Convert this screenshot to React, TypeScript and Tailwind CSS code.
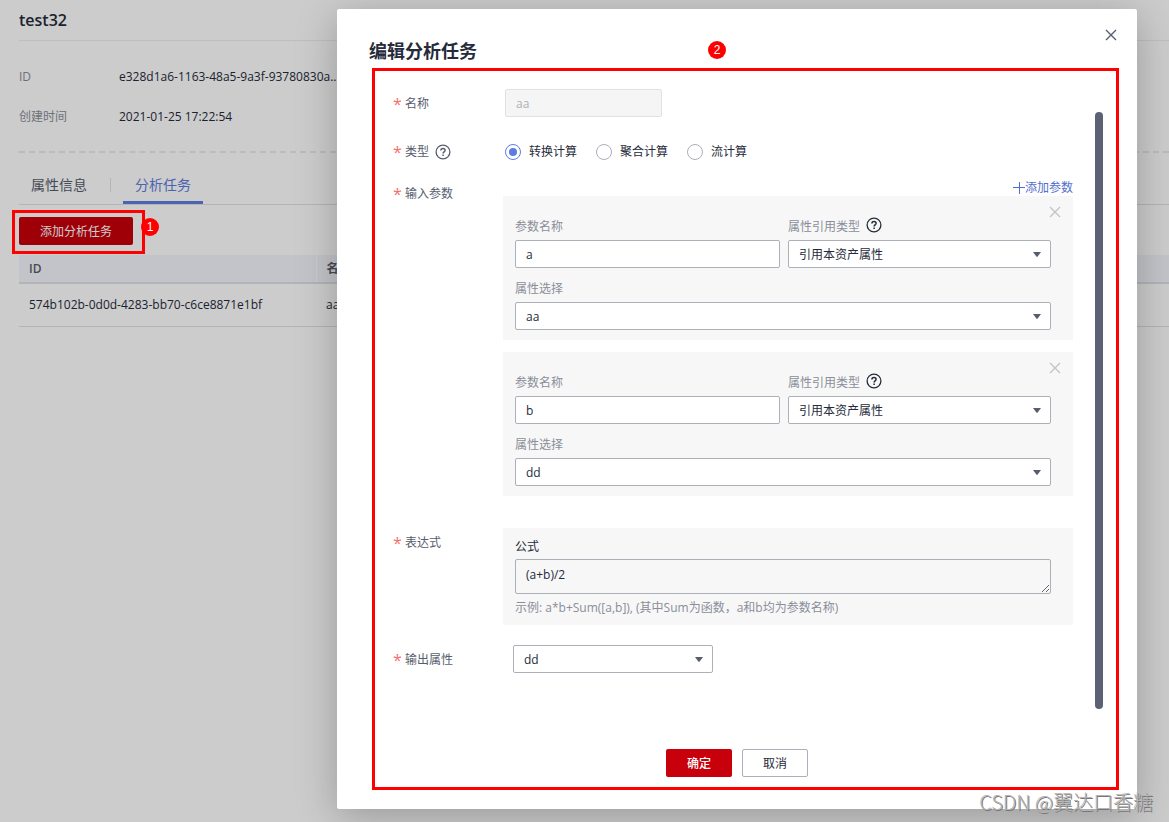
import { ReactNode, useState } from 'react';

const PARAMS = [
  { id: 1, name: 'a', refType: '引用本资产属性', attribute: 'aa' },
  { id: 2, name: 'b', refType: '引用本资产属性', attribute: 'dd' },
];

const CALC_TYPES = ['转换计算', '聚合计算', '流计算'];

function CloseIcon({ className }: { className: string }) {
  return (
    <svg viewBox="0 0 12 12" className={className} fill="none" stroke="currentColor" strokeWidth="1.4" aria-hidden="true">
      <path d="M1 1l10 10M11 1L1 11" />
    </svg>
  );
}

function HelpIcon({ className }: { className: string }) {
  return (
    <svg viewBox="0 0 16 16" className={className} fill="none" stroke="currentColor" aria-hidden="true">
      <circle cx="8" cy="8" r="6.9" strokeWidth="1.3" />
      <path d="M5.9 6.4c0-1.3.9-2 2.1-2s2.1.8 2.1 1.9c0 1.5-2 1.6-2 3.2" strokeWidth="1.5" />
      <path d="M8.1 10.6v1.5" strokeWidth="1.5" />
    </svg>
  );
}

function Badge({ children, className }: { children: ReactNode; className: string }) {
  return (
    <span
      className={`absolute z-30 flex h-[18px] w-[18px] items-center justify-center rounded-full bg-[#ff0000] font-['Liberation_Sans',sans-serif] text-xs text-white ${className}`}
    >
      {children}
    </span>
  );
}

function Select({ id, value }: { id: string; value: string }) {
  return (
    <div className="relative">
      <select
        id={id}
        defaultValue={value}
        className="block h-7 w-full appearance-none rounded-xs border border-[#adb0b8] bg-white px-2.5 pt-0.5 text-xs text-[#252b3a]"
      >
        <option>{value}</option>
      </select>
      <svg
        viewBox="0 0 8 5"
        className="pointer-events-none absolute top-3 right-2.5 h-[5px] w-2 fill-[#575d6c]"
        aria-hidden="true"
      >
        <path d="M0 0h8L4.6 4.6a.8.8 0 0 1-1.2 0z" />
      </svg>
    </div>
  );
}

function FormRow({ label, help, htmlFor, children }: { label: string; help?: boolean; htmlFor?: string; children: ReactNode }) {
  return (
    <div className="grid grid-cols-[110px_minmax(0,1fr)]">
      <div className="flex h-[30px] items-center text-[#575d6c]">
        <span className="w-3 text-base leading-none text-[#f66f6a]">*</span>
        <label htmlFor={htmlFor}>{label}</label>
        {help && <HelpIcon className="ml-1.5 h-4 w-4" />}
      </div>
      {children}
    </div>
  );
}

function ParamCard({ param }: { param: (typeof PARAMS)[number] }) {
  return (
    <div className="relative bg-[#f7f7f7] pt-5 pr-[22px] pb-2.5 pl-3">
      <button type="button" aria-label="删除" className="absolute top-2.5 right-3 text-[#c2c4c9]">
        <CloseIcon className="h-3 w-3" />
      </button>
      <div className="grid grid-cols-[265fr_263fr] gap-2">
        <div>
          <label htmlFor={`name-${param.id}`} className="flex h-6 items-start leading-[22px] text-[#8a8e99]">
            参数名称
          </label>
          <input
            id={`name-${param.id}`}
            defaultValue={param.name}
            className="block h-7 w-full rounded-xs border border-[#adb0b8] bg-white px-2.5 text-[#252b3a]"
          />
        </div>
        <div>
          <div className="flex h-6 items-start leading-[22px] text-[#8a8e99]">
            <label htmlFor={`ref-${param.id}`}>属性引用类型</label>
            <HelpIcon className="mt-px ml-1.5 h-4 w-4 text-[#252b3a]" />
          </div>
          <Select id={`ref-${param.id}`} value={param.refType} />
        </div>
      </div>
      <label htmlFor={`attr-${param.id}`} className="mt-2.5 flex h-6 items-start leading-[22px] text-[#8a8e99]">
        属性选择
      </label>
      <Select id={`attr-${param.id}`} value={param.attribute} />
    </div>
  );
}

function AssetPage() {
  return (
    <main className="min-h-screen bg-white pl-[19px] text-[#252b3a]">
      <h1 className="flex h-[41px] items-center border-b border-[#eeeeee] text-base font-semibold">test32</h1>
      <dl className="pt-4 pb-3.5">
        <div className="flex h-10 items-center">
          <dt className="w-[100px] text-[#8a8e99]">ID</dt>
          <dd>e328d1a6-1163-48a5-9a3f-93780830a...</dd>
        </div>
        <div className="flex h-10 items-center">
          <dt className="w-[100px] text-[#8a8e99]">创建时间</dt>
          <dd>2021-01-25 17:22:54</dd>
        </div>
      </dl>
      <div className="border-t-2 border-dashed border-[#eaeaea]" />

      <nav className="mt-3 flex h-10 items-stretch border-b border-[#dfe1e6] text-sm">
        <button type="button" className="border-b-3 border-transparent px-3 pt-1 text-[#575d6c]">
          属性信息
        </button>
        <span className="mr-3 ml-[11px] h-3.5 w-px self-center bg-[#dfe1e6]" />
        <button type="button" className="border-b-3 border-[#5e7ce0] px-3 pt-1 text-[#5e7ce0]">
          分析任务
        </button>
      </nav>

      <div className="relative mt-3 w-fit">
        <button type="button" className="block h-7 rounded-xs bg-[#c7000b] px-[21px] pt-0.5 text-white">
          添加分析任务
        </button>
        <div className="absolute -top-[7px] -right-3 -bottom-[9px] -left-[7px] z-30 border-3 border-[#ff0000]" />
        <Badge className="top-px -right-[26px]">1</Badge>
      </div>

      <table className="mt-2.5 w-full table-fixed text-left">
        <thead>
          <tr className="h-7 border-b-2 border-[#dfe1e6] bg-[#f4f5fc] text-[#575d6c]">
            <th className="w-[297px] border-r border-white px-2.5 font-semibold">ID</th>
            <th className="px-2.5 font-semibold">名称</th>
          </tr>
        </thead>
        <tbody>
          <tr className="h-[43px] border-b border-[#dfe1e6]">
            <td className="px-2.5">574b102b-0d0d-4283-bb70-c6ce8871e1bf</td>
            <td className="px-2.5">aa</td>
          </tr>
        </tbody>
      </table>
    </main>
  );
}

function EditTaskDialog() {
  const [calcType, setCalcType] = useState(CALC_TYPES[0]);

  return (
    <section
      role="dialog"
      aria-labelledby="dialog-title"
      className="relative flex w-full max-w-[800px] flex-col rounded-xs bg-white px-8 pb-8 text-[#252b3a] shadow-[0_8px_40px_rgba(0,0,0,0.25)]"
    >
      <header className="flex justify-between pt-7">
        <h2 id="dialog-title" className="text-lg leading-7 font-bold">
          编辑分析任务
        </h2>
        <button type="button" aria-label="关闭" className="-mt-2 -mr-[18px] flex h-6 w-6 justify-center text-[#575d6c]">
          <CloseIcon className="h-3 w-3" />
        </button>
      </header>

      <div className="flex flex-1 gap-[22px] pt-6 pr-0.5 pl-6">
        <form id="task-form" className="flex flex-1 flex-col">
          <FormRow label="名称" htmlFor="task-name">
            <div className="pl-0.5">
              <input
                id="task-name"
                disabled
                defaultValue="aa"
                className="block h-7 w-[157px] rounded-xs border border-[#dfe1e6] bg-[#f5f5f5] px-2.5 text-[#adb0b8]"
              />
            </div>
          </FormRow>
          <div className="h-[18px]" />
          <FormRow label="类型" help>
            <div className="flex items-center gap-[19px] pl-0.5">
              {CALC_TYPES.map(type => (
                <label key={type} className="flex items-center gap-2">
                  <input
                    type="radio"
                    name="calc-type"
                    checked={calcType === type}
                    onChange={() => setCalcType(type)}
                    className="h-4 w-4 appearance-none rounded-full border border-[#adb0b8] bg-white bg-clip-content p-[3px] checked:border-[#5e7ce0] checked:bg-[#5e7ce0]"
                  />
                  {type}
                </label>
              ))}
            </div>
          </FormRow>
          <div className="h-3" />
          <FormRow label="输入参数">
            <div>
              <div className="flex h-[17px] items-end justify-end">
                <button type="button" className="flex items-center text-[#526ecc]">
                  <svg viewBox="0 0 12 12" className="h-3 w-3" stroke="currentColor" aria-hidden="true">
                    <path d="M6.5 0v12M0 5.5h12" />
                  </svg>
                  添加参数
                </button>
              </div>
              <div className="flex flex-col gap-3">
                {PARAMS.map(param => (
                  <ParamCard key={param.id} param={param} />
                ))}
              </div>
            </div>
          </FormRow>
          <div className="h-8" />
          <FormRow label="表达式" htmlFor="formula">
            <div className="bg-[#f7f7f7] pt-2 pr-[22px] pb-[7px] pl-3">
              <label htmlFor="formula" className="block h-[23px] leading-[22px]">
                公式
              </label>
              <textarea
                id="formula"
                defaultValue="(a+b)/2"
                className="block h-[35px] w-full rounded-xs border border-[#adb0b8] px-2.5 py-1 leading-[22px]"
              />
              <p className="mt-1 leading-5 text-[#8a8e99]">示例: a*b+Sum([a,b]), (其中Sum为函数，a和b均为参数名称)</p>
            </div>
          </FormRow>
          <div className="h-5" />
          <FormRow label="输出属性" htmlFor="output">
            <div className="w-[210px] pl-2.5">
              <Select id="output" value="dd" />
            </div>
          </FormRow>
        </form>
        <div className="mt-[23px] mb-10 w-2 rounded-full bg-[#5c6173]" />
      </div>

      <footer className="flex justify-center gap-2.5">
        <button type="submit" form="task-form" className="h-7 w-[66px] rounded-xs bg-[#c7000b] pt-0.5 font-medium text-white">
          确定
        </button>
        <button type="button" className="h-7 w-[66px] rounded-xs border border-[#adb0b8] pt-0.5">
          取消
        </button>
      </footer>

      <div className="pointer-events-none absolute top-[59px] right-[18px] bottom-[19px] left-[35px] border-3 border-[#ff0000]" />
      <Badge className="top-8 left-[371px]">2</Badge>
    </section>
  );
}

export default function App() {
  return (
    <div className="font-['Open_Sans','Noto_Sans_CJK_SC',sans-serif] text-xs">
      <AssetPage />
      <div className="absolute inset-0 z-20 flex justify-end bg-black/20 pt-[9px] pr-8 pb-[13px] pl-8">
        <EditTaskDialog />
      </div>
      <p className="absolute right-4 bottom-1.5 z-40 font-['Noto_Sans_CJK_SC',sans-serif] text-xl font-light text-[#b4b4b4] [text-shadow:1px_1px_0_#777777]">
        CSDN @翼达口香糖
      </p>
    </div>
  );
}
